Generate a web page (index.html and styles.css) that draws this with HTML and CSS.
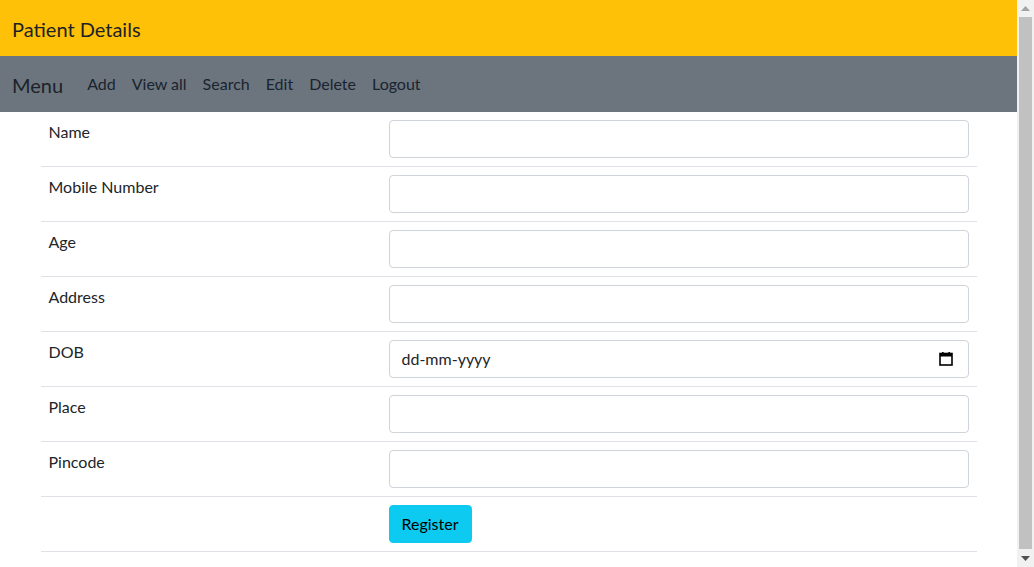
FILE: index.html
```html
<!DOCTYPE html>
<html lang="en">
<head>
<meta charset="utf-8">
<title>Patient Details</title>
<link rel="stylesheet" href="styles.css">
</head>
<body>
<div class="page">
  <header class="topbar">
    <span class="brand">Patient Details</span>
  </header>
  <nav class="menubar">
    <span class="brand">Menu</span>
    <ul class="links">
      <li><a href="#">Add</a></li>
      <li><a href="#">View all</a></li>
      <li><a href="#">Search</a></li>
      <li><a href="#">Edit</a></li>
      <li><a href="#">Delete</a></li>
      <li><a href="#">Logout</a></li>
    </ul>
  </nav>
  <main class="container">
    <table class="form-table">
      <tr><td class="label">Name</td><td><input class="field" type="text"></td></tr>
      <tr><td class="label">Mobile Number</td><td><input class="field" type="text"></td></tr>
      <tr><td class="label">Age</td><td><input class="field" type="text"></td></tr>
      <tr><td class="label">Address</td><td><input class="field" type="text"></td></tr>
      <tr><td class="label">DOB</td><td>
        <div class="field date-field">
          <span class="date-text">dd-mm-yyyy</span>
          <svg class="cal" width="14" height="14" viewBox="0 0 14 14" aria-hidden="true">
            <rect x="1" y="1.5" width="12" height="11.5" fill="none" stroke="#000" stroke-width="1.6"/>
            <rect x="1" y="1.5" width="12" height="3" fill="#000"/>
            <rect x="3" y="0" width="1.6" height="2" fill="#000"/>
            <rect x="9.4" y="0" width="1.6" height="2" fill="#000"/>
          </svg>
        </div>
      </td></tr>
      <tr><td class="label">Place</td><td><input class="field" type="text"></td></tr>
      <tr><td class="label">Pincode</td><td><input class="field" type="text"></td></tr>
      <tr><td class="label"></td><td><button class="btn" type="button">Register</button></td></tr>
    </table>
  </main>
</div>
<div class="scrollbar" aria-hidden="true">
  <div class="sb-btn">
    <svg width="9" height="5" viewBox="0 0 9 5"><polygon points="0,5 4.5,0 9,5" fill="#a3a3a3"/></svg>
  </div>
  <div class="sb-track"><div class="sb-thumb"></div></div>
  <div class="sb-btn">
    <svg width="9" height="5" viewBox="0 0 9 5"><polygon points="0,0 9,0 4.5,5" fill="#505050"/></svg>
  </div>
</div>
</body>
</html>
```

FILE: styles.css
```css
html, body {
  margin: 0;
  padding: 0;
}
body {
  font-family: "Lato", "Noto Sans", sans-serif;
  font-size: 16px;
  line-height: 1.5;
  color: #212529;
  background: #fff;
}
.page {
  margin-right: 17px;
  padding-bottom: 16px;
}
.topbar {
  background: #ffc107;
  height: 56px;
  display: flex;
  align-items: center;
  padding: 0 12px;
  box-sizing: border-box;
}
.brand {
  font-size: 20px;
  line-height: 30px;
  color: #1c2229;
}
.topbar .brand {
  padding-top: 1px;
}
.menubar {
  background: #6c757d;
  height: 56px;
  display: flex;
  align-items: center;
  padding: 0 12px;
  box-sizing: border-box;
}
.menubar .brand {
  margin-right: 16px;
  padding-top: 2px;
}
.links {
  display: flex;
  list-style: none;
  margin: 0;
  padding: 0;
}
.links a {
  display: block;
  padding: 8px 8px;
  color: #1a2330;
  text-decoration: none;
}
.container {
  width: 936px;
  margin: 0 auto;
  padding: 0 12px;
  box-sizing: content-box;
}
.form-table {
  width: 100%;
  border-collapse: collapse;
}
.form-table td {
  padding: 8px;
  border-bottom: 1px solid #dee2e6;
  vertical-align: top;
}
.form-table td.label {
  width: 324px;
}
.field {
  display: block;
  width: 100%;
  box-sizing: border-box;
  height: 38px;
  padding: 6px 12px;
  font: inherit;
  color: #212529;
  border: 1px solid #ced4da;
  border-radius: 4px;
  background: #fff;
}
.date-field {
  display: flex;
  align-items: center;
  justify-content: space-between;
}
.date-text {
  color: #212529;
}
.cal {
  margin-right: 3px;
}
.btn {
  font: inherit;
  color: #000;
  background: #0dcaf0;
  border: 1px solid #0dcaf0;
  border-radius: 4px;
  padding: 6px 12px;
  height: 38px;
}
.scrollbar {
  position: fixed;
  top: 0;
  right: 0;
  bottom: 0;
  width: 17px;
  background: #f1f1f1;
  display: flex;
  flex-direction: column;
}
.sb-btn {
  height: 17px;
  display: flex;
  align-items: center;
  justify-content: center;
}
.sb-track {
  flex: 1;
  padding: 0 2px;
  display: flex;
}
.sb-thumb {
  flex: 1;
  background: #c1c1c1;
  margin-bottom: 1px;
}
```
